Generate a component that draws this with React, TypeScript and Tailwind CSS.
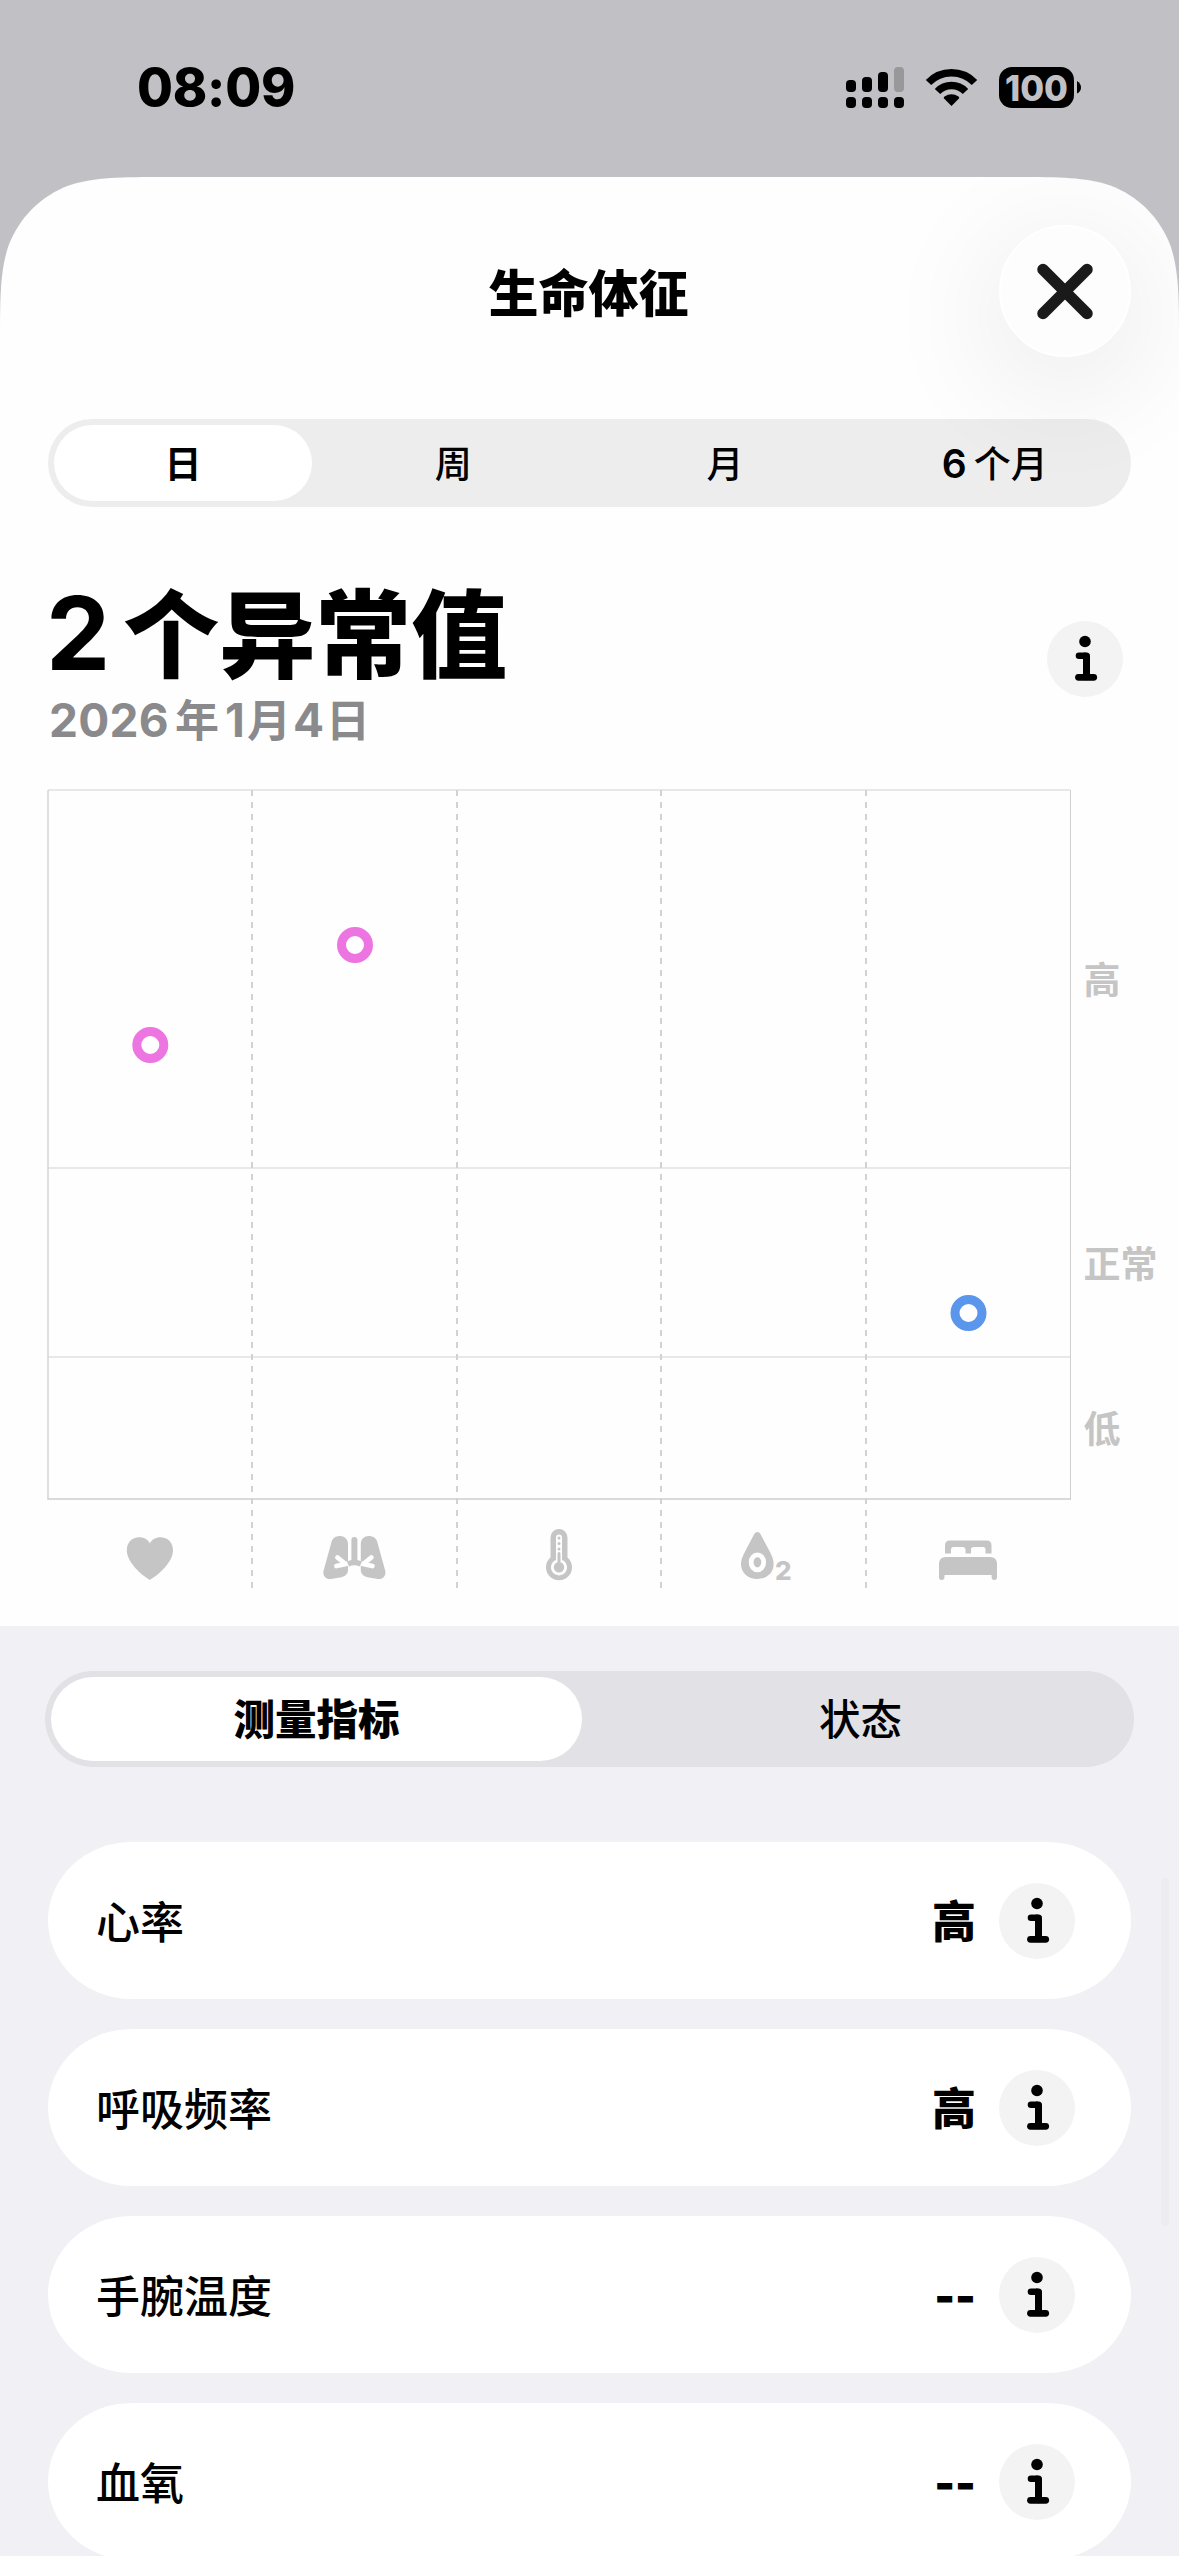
import React from "react";

const cjk = "[font-family:Inter,'Noto_Sans_CJK_SC',sans-serif]";

function InfoIcon() {
  return (
    <span className="flex size-[76px] shrink-0 items-center justify-center rounded-full bg-[#f3f3f3]">
      <svg viewBox="0 0 76 76" className="size-[76px]" fill="none" stroke="#000">
        <circle cx="38" cy="20.5" r="5.8" fill="#000" stroke="none" />
        <path d="M32 34.800H37.500M39.500 56V37" strokeWidth="6.600" strokeLinecap="round" />
        <path d="M37 31.500H39.500Q43 31.500 43 35V56H36V38Z" fill="#000" stroke="none" />
        <path d="M31.500 56.300H46.700" strokeWidth="6.800" strokeLinecap="round" />
      </svg>
    </span>
  );
}

function StatusBar() {
  return (
    <div className="flex h-[177px] items-start justify-between">
      <span className="ml-[137px] mt-[57px] text-[52px] leading-[62px] font-extrabold tracking-[-0.2px]">08:09</span>
      <svg viewBox="840 60 250 56" className="mr-[89px] mt-[60px] h-[56px] w-[250px]">
        <rect x="846" y="80" width="10" height="12" rx="4" />
        <rect x="862" y="77" width="10" height="15" rx="4" />
        <rect x="878" y="72" width="10" height="20" rx="4" />
        <rect x="894" y="67" width="10" height="25" rx="4" fill="#98979a" />
        {[846, 862, 878, 894].map((x) => (
          <rect key={x} x={x} y="97" width="10" height="11" rx="4" />
        ))}
        <g fill="none" stroke="#000" strokeWidth="7.500">
          <path d="M928.5 82.5A32 32 0 0 1 974.5 82.5" />
          <path d="M937.5 91.5A19.5 19.5 0 0 1 965.5 91.5" />
        </g>
        <path d="M951.5 106L943.8 98.2Q943.6 97.2 944.5 96.6Q951.5 92 958.5 96.6Q959.4 97.2 959.2 98.2Z" />
        <rect x="999" y="67" width="75" height="41" rx="13" />
        <path d="M1077 81Q1081 83.500 1081 87.500Q1081 91.500 1077 93.500Z" />
        <text x="1036.500" y="100.500" textAnchor="middle" fontSize="35.500" fontWeight="800" fill="#c1c0c5" textLength="63" lengthAdjust="spacingAndGlyphs" fontFamily="Inter">100</text>
      </svg>
    </div>
  );
}

function Chart() {
  return (
    <svg viewBox="0 780 1179 846" className="block h-[846px] w-[1179px]">
      <g stroke="#e8e8e8" strokeWidth="2">
        <path d="M48 790H1070M48 1168H1070M48 1357H1070" />
      </g>
      <path d="M48 1499H1071" stroke="#dadada" strokeWidth="2" />
      <path d="M48 790V1500" stroke="#d4d4d4" strokeWidth="1.500" />
      <path d="M1070.500 790V1500" stroke="#d0d0d0" strokeWidth="1" />
      {[252, 457, 661, 866].map((x) => (
        <path key={x} d={`M${x} 790V1590`} stroke="#d2d2d2" strokeWidth="2" strokeDasharray="6 6" />
      ))}
      <g fill="#fff" strokeWidth="9">
        <circle cx="150.300" cy="1045" r="13.500" stroke="#ed75e1" />
        <circle cx="355" cy="945" r="13.500" stroke="#ed75e1" />
        <circle cx="968.500" cy="1313" r="13.500" stroke="#5a96ec" />
      </g>
      <g fill="#c5c5c5">
        <path d="M149.900 1580C138 1573 126.800 1560 126.800 1550.500C126.800 1542.500 132 1537.300 139.500 1537.300C144 1537.300 148 1539.500 149.900 1543.500C151.800 1539.500 155.800 1537.300 160.300 1537.300C167.800 1537.300 173 1542.500 173 1550.500C173 1560 161.800 1573 149.900 1580Z" />
        <path d="M340 1536C344.500 1536 348 1539 348 1544V1570C348 1574 345 1576.500 341.500 1577.200L331 1579C326 1579.500 322.500 1576 323.500 1571L331.500 1542C332.500 1538 336 1536 340 1536Z" />
        <path d="M368.800 1536C364.300 1536 360.800 1539 360.800 1544V1570C360.800 1574 363.800 1576.500 367.300 1577.200L377.800 1579C382.800 1579.500 386.300 1576 385.300 1571L377.300 1542C376.300 1538 372.800 1536 368.800 1536Z" />
        <path d="M354.400 1540V1562" stroke="#c5c5c5" strokeWidth="6" strokeLinecap="round" fill="none" />
        <path d="M345.500 1564L337.500 1557.500M346 1563.800L336.500 1566M363.300 1564L371.300 1557.500M362.800 1563.800L372.300 1566" stroke="#fff" strokeWidth="4.800" strokeLinecap="round" fill="none" />
        <path d="M348 1564Q354.400 1561 360.800 1564" stroke="#c5c5c5" strokeWidth="5.500" fill="none" />
        <path d="M550.500 1537.500A8.500 8.500 0 0 1 567.500 1537.500V1557.500A13 13 0 1 1 550.500 1557.500Z" />
        <path d="M556 1537.500A3 3 0 0 1 562 1537.500V1560A8 8 0 1 1 556 1560Z" fill="#fff" />
        <circle cx="559" cy="1567.300" r="5.200" />
        <rect x="557.500" y="1552" width="3" height="15" rx="1.500" />
        {[1538, 1543.5, 1549].map((y) => (
          <circle key={y} cx="559" cy={y} r="1.500" />
        ))}
        <path d="M757.400 1532C759 1532 760 1533 760.700 1534.500L770 1552C772.500 1557 773.600 1560 773.600 1564C773.600 1573 766.500 1579 757.400 1579S741 1573 741 1564C741 1560 742.300 1557 744.800 1552L754 1534.500C754.800 1533 755.800 1532 757.400 1532Z" />
        <ellipse cx="757.400" cy="1562.300" rx="6.300" ry="7.500" stroke="#fff" strokeWidth="4.800" />
        <text x="775" y="1580" fontSize="26" fontWeight="800" fontFamily="Inter">2</text>
        <path d="M945 1553.500V1545.500Q945 1540.500 950 1540.500H986.500Q991.500 1540.500 991.500 1545.500V1553.500H985.500V1549.500Q985.500 1547 983 1547H974Q971 1547 971 1549.500V1553.500H965.500V1549.500Q965.500 1547 962.500 1547H953.500Q951 1547 951 1549.500V1553.500Z" />
        <path d="M939 1564Q939 1557 946 1557H990Q997 1557 997 1564V1577Q997 1580 994.300 1580T991.600 1577V1575H944.500V1577Q944.500 1580 941.700 1580T939 1577Z" />
      </g>
      <g fill="#c5c5c5" fontSize="37" fontWeight="700" fontFamily="Inter, 'Noto Sans CJK SC'">
        <text x="1083.500" y="994">高</text>
        <text x="1083.500" y="1278">正常</text>
        <text x="1083.500" y="1443">低</text>
      </g>
    </svg>
  );
}

const rows = [
  ["心率", "高"],
  ["呼吸频率", "高"],
  ["手腕温度", "--"],
  ["血氧", "--"],
];

export default function App() {
  return (
    <div className={`h-[2556px] w-[1179px] overflow-hidden bg-[#c1c0c5] text-black ${cjk}`} lang="zh-CN">
      <StatusBar />
      <main className="relative flex h-[2379px] flex-col overflow-hidden bg-[#fefefe] [clip-path:path('M168_0H1011C1059_0_1083.5_0_1109.5_8.2C1138_18.6_1160.4_41_1170.8_69.5C1179_95.5_1179_120_1179_168V2379H0V168C0_120_0_95.5_8.2_69.5C18.6_41_41_18.6_69.5_8.2C95.5_0_120_0_168_0Z')]">
        <header className="relative flex h-[242px] shrink-0 items-center justify-center">
          <h1 className="mt-[-9px] -ml-[2px] text-[50px] leading-none font-black">生命体征</h1>
          <button className="absolute top-[48px] right-[48px] flex size-[132px] items-center justify-center rounded-full border-2 border-white bg-[#fdfdfd] shadow-[0_24px_110px_24px_rgba(0,0,0,0.06)]">
            <svg viewBox="0 0 60 60" className="size-[60px]" stroke="#1a1a1a" strokeWidth="11.500" strokeLinecap="round">
              <path d="M8 8.500L52 52.500M52 8.500L8 52.500" />
            </svg>
          </button>
        </header>
        <nav className="relative mx-[48px] flex h-[88px] shrink-0 rounded-full bg-black/[0.067] p-[6px] text-[37px] font-medium">
          <span className="flex w-[258px] items-center justify-center rounded-full bg-white pt-[3px] font-bold">日</span>
          <span className="flex flex-1 items-center justify-center pt-[3px] pl-[11px]">周</span>
          <span className="flex flex-1 items-center justify-center pt-[3px] pl-[11px]">月</span>
          <span className="flex flex-1 items-center justify-center pt-[3px] pl-[9px]"><span className="text-[39px] font-semibold">6</span><span className="ml-[7px]">个月</span></span>
        </nav>
        <section className="flex h-[273px] shrink-0 justify-between">
          <div className="ml-[46px] pt-[70px]">
            <h2 className="flex h-[113px] items-baseline text-[96px] leading-[112px] font-black"><span className="mr-[13px] text-[102px] font-bold">2</span>个异常值</h2>
            <p className="ml-[3px] flex items-baseline text-[44px] leading-[60px] font-bold text-[#8a8a8c]"><span className="text-[46px] tracking-[0.3px]">2026</span><span className="mr-[6px] ml-[6px]">年</span><span className="text-[46px]">1</span><span className="mx-[2px]">月</span><span className="text-[46px]">4</span><span className="ml-[2px]">日</span></p>
          </div>
          <div className="mr-[56px] mt-[114px]"><InfoIcon /></div>
        </section>
        <div className="h-[846px] shrink-0"><Chart /></div>
        <section className="relative flex flex-1 flex-col bg-[#f1f0f5]">
          <div className="mx-[45px] mt-[45px] flex h-[96px] shrink-0 rounded-full bg-[#e2e1e6] p-[6px] text-[41.500px]">
            <span className="flex w-[531px] items-center justify-center rounded-full bg-white pt-[3px] font-black">测量指标</span>
            <span className="flex flex-1 items-center justify-center pt-[3px] pl-[11px] font-medium">状态</span>
          </div>
          <div className="mx-[48px] mt-[75px] flex flex-col gap-[30px]">
            {rows.map(([name, value]) => (
              <div key={name} className="flex h-[157px] shrink-0 items-center rounded-[84px/79px] bg-white pr-[56px] pl-[48px] text-[44px]">
                <span className="flex-1 pt-[4px] font-medium">{name}</span>
                <span className="mr-[23px] pt-[3px] font-black">{value}</span>
                <InfoIcon />
              </div>
            ))}
          </div>
          <i className="absolute top-[252px] right-[10px] h-[348px] w-[8px] rounded-full bg-[#edecf1]" />
        </section>
      </main>
    </div>
  );
}
